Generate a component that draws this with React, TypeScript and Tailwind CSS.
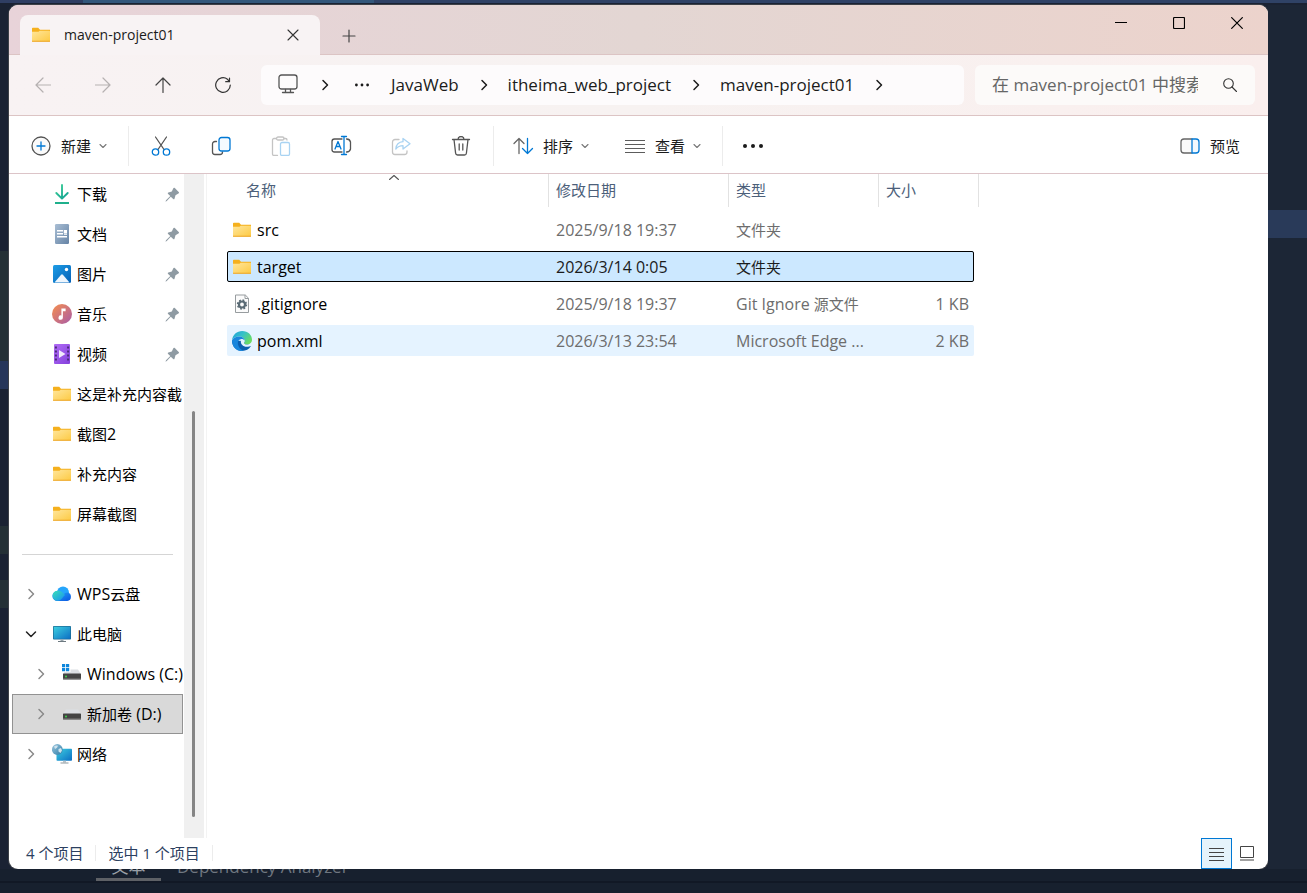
import type { ReactNode } from 'react'
import clsx from 'clsx'

/* ---------- line icons ---------- */

function Line({ children, size = 20, className }: { children: ReactNode; size?: number; className?: string }) {
  return (
    <svg
      width={size}
      height={size}
      viewBox={`0 0 ${size} ${size}`}
      fill="none"
      stroke="currentColor"
      strokeWidth="1.3"
      strokeLinecap="round"
      strokeLinejoin="round"
      className={clsx('shrink-0', className)}
      aria-hidden="true"
    >
      {children}
    </svg>
  )
}

const ChevronRight = ({ className }: { className?: string }) => (
  <Line size={16} className={className}>
    <path d="M6 3.5 10.5 8 6 12.5" strokeWidth="1.5" />
  </Line>
)

const ChevronDown = () => (
  <Line size={12} className="text-[#777777]">
    <path d="M3 4.5 6 7.5 9 4.5" strokeWidth="1.1" />
  </Line>
)

const PlusCircle = () => (
  <Line>
    <circle cx="10" cy="10" r="9" stroke="#555" fill="#fafafa" />
    <path d="M10 6v8M6 10h8" stroke="#0078d4" />
  </Line>
)

const Cut = () => (
  <Line>
    <path d="M4.500 1 13 13.500M15.500 1 7 13.500" stroke="#555" />
    <circle cx="4.500" cy="16" r="3.200" stroke="#0078d4" />
    <circle cx="15.500" cy="16" r="3.200" stroke="#0078d4" />
  </Line>
)

const Copy = () => (
  <Line>
    <path d="M5.500 5.500H4A2.500 2.500 0 0 0 1.500 8v8A2.500 2.500 0 0 0 4 18.500h5a2.500 2.500 0 0 0 2.500-2.500" stroke="#555" />
    <rect x="8" y="1.500" width="11" height="13.500" rx="2.500" stroke="#0078d4" fill="#f5faff" />
  </Line>
)

const Paste = () => (
  <Line>
    <path d="M5.500 2.500H3A1.500 1.500 0 0 0 1.500 4v14A1.500 1.500 0 0 0 3 19.500h3.500M13 2.500h1.500A1.500 1.500 0 0 1 16 4" stroke="#c4c4c4" />
    <rect x="5.500" y="1" width="7.500" height="3" rx="1.500" stroke="#c4c4c4" />
    <rect x="9.500" y="6.500" width="9" height="13" rx="1.500" stroke="#a9d3f2" />
  </Line>
)

const Rename = () => (
  <Line size={22}>
    <path d="M12 4H4.500A2.500 2.500 0 0 0 2 6.500v8A2.500 2.500 0 0 0 4.500 17H12M16.500 4a4 4 0 0 1 4 3v7a4 4 0 0 1-4 3" stroke="#555" />
    <path d="M14 1.500v18M11.500 1.500h5M11.500 19.500h5M5 14l3-7.500L11 14M6 11.500h4" stroke="#0078d4" />
  </Line>
)

const Share = () => (
  <Line>
    <path d="M8 3.500H4A2.500 2.500 0 0 0 1.500 6v10A2.500 2.500 0 0 0 4 18.500h9.500A2.500 2.500 0 0 0 16 16v-1" stroke="#c4c4c4" />
    <path d="M12 2.500v3.200c-4.500.3-6.800 3-7.200 7.300 2-2.500 4-3.300 7.200-3.300v3.300l7-5.300Z" stroke="#a9d3f2" />
  </Line>
)

const Trash = () => (
  <Line>
    <path d="M1.500 3.500h17M7 3.500a3 3 0 0 1 6 0M3 3.500l1.600 13.700A2 2 0 0 0 6.600 19h6.800a2 2 0 0 0 2-1.800L17 3.500M8.200 8v6M11.800 8v6" stroke="#555" />
  </Line>
)

const Sort = () => (
  <Line size={22}>
    <path d="M7 18.500V3.500M2 8.500l5-5 5 5" stroke="#666" />
    <path d="M15.500 3.500v15M10.500 13.500l5 5 5-5" stroke="#0078d4" />
  </Line>
)

const Lines = () => (
  <svg width="20" height="20" viewBox="0 0 20 20" className="shrink-0" aria-hidden="true">
    <path d="M0 4.500h20M0 8.500h20M0 12.500h20M0 16.500h20" stroke="#5c5c5c" />
  </svg>
)

const More = ({ size = 22, r = 2 }: { size?: number; r?: number }) => (
  <svg width={size} height="8" viewBox={`0 0 ${size} 8`} fill="#1b1b1b" className="shrink-0" aria-hidden="true">
    <circle cx={size / 2 - 4 * r} cy="4" r={r} />
    <circle cx={size / 2} cy="4" r={r} />
    <circle cx={size / 2 + 4 * r} cy="4" r={r} />
  </svg>
)

const PreviewPane = () => (
  <Line>
    <path d="M12 3H4A3 3 0 0 0 1 6v8a3 3 0 0 0 3 3h8" stroke="#666" fill="#fafafa" />
    <path d="M12 3h4a3 3 0 0 1 3 3v8a3 3 0 0 1-3 3h-4Z" stroke="#0078d4" fill="#f3f9fe" />
  </Line>
)

const Monitor = () => (
  <Line size={22} className="text-[#555555]">
    <rect x="2" y="1" width="18" height="14" rx="2.500" />
    <path d="M8.500 15.500v3M13.500 15.500v3M5.500 18.500h11" />
  </Line>
)

const Pin = () => (
  <svg width="16" height="16" viewBox="0 0 16 16" fill="#8f9ba3" className="shrink-0" aria-hidden="true">
    <path d="M9.200 2.500c.4-.9 1-.9 1.600-.4l3.900 3.900c.6.600.4 1.200-.3 1.600l-2.900 1.600-1 3.500c-.2.700-.8.800-1.300.3L6.800 10.700l-4 4.400-1.300.6.500-1.400 4.300-4.200-2.200-2.200c-.5-.5-.4-1.100.3-1.300l3.400-1Z" />
  </svg>
)

/* ---------- coloured icons ---------- */

const Pic = ({ children }: { children: ReactNode }) => (
  <svg width="20" height="20" viewBox="0 0 20 20" className="shrink-0" aria-hidden="true">
    {children}
  </svg>
)

const Folder = () => (
  <Pic>
    <path d="M1 3.500q0-.8.800-.8h5.400l1.800 2h10V9H1Z" fill="#f5b01d" />
    <path d="M1 6.700h6.500l1.200-1h9.600q.7 0 .7.700v10H1Z" fill="url(#folder)" />
    <path d="M1 15.800h18v.4q0 .6-.6.600H1.600q-.6 0-.6-.6Z" fill="#eda524" />
  </Pic>
)

const Download = () => (
  <Pic>
    <path d="M10 1v13.500M4.300 9l5.700 5.700L15.700 9" fill="none" stroke="url(#green)" strokeWidth="1.900" strokeLinecap="round" strokeLinejoin="round" />
    <path d="M3 19h14" stroke="#1fb08c" strokeWidth="1.800" />
  </Pic>
)

const Documents = () => (
  <Pic>
    <rect x="3" y="0" width="14" height="20" rx="1.200" fill="url(#doc)" />
    <path d="M5 6.700h6M5 9.700h6M5 12.700h10" stroke="#fff" strokeWidth="1.400" />
    <rect x="11.800" y="6" width="3.200" height="3.600" fill="#fff" />
    <path d="M12 10.500h3" stroke="#fff" strokeWidth=".8" />
  </Pic>
)

const Pictures = () => (
  <Pic>
    <rect x="1" y="1" width="18" height="18" rx="1.500" fill="url(#blue)" />
    <path d="m2.500 18.500 6.600-7.800q.9-.9 1.800 0l6.600 7.800Z" fill="#eef6fd" />
    <circle cx="14.500" cy="5.500" r="1.700" fill="#fff" />
  </Pic>
)

const Music = () => (
  <Pic>
    <circle cx="10" cy="10" r="10" fill="url(#music)" />
    <path d="M9.400 4.500h4.200v2.800h-2.700v6.200a2.200 2.200 0 1 1-1.500-2Z" fill="#fff" />
  </Pic>
)

const Videos = () => (
  <Pic>
    <rect x="2" y="0" width="16" height="20" rx="1" fill="url(#video)" />
    <path d="M3.900 2.500v16M16.100 2.500v16" stroke="#4b2a78" strokeWidth="2" strokeDasharray="2 2" />
    <path d="M7 6v8l6.500-4Z" fill="#f2eafc" />
  </Pic>
)

const Cloud = () => (
  <Pic>
    <circle cx="11" cy="8.500" r="6" fill="#25a5fb" />
    <path d="M6 7a5 5 0 1 0 0 9.900h9.300a4.300 4.300 0 0 0 0-8.500c-3 0-4.500 3.500-6.300 3.500Z" fill="url(#cloudBlue)" />
    <path d="M6 6.700a5 5 0 0 0-.4 10.100c3.900.3 5-4.300 7.500-5.800C11 9 9.500 6.700 6 6.700Z" fill="url(#cloudTeal)" />
  </Pic>
)

const Computer = () => (
  <Pic>
    <rect x="1" y="2" width="18" height="13.500" rx=".8" fill="#1c6a93" />
    <rect x="1.700" y="2.700" width="16.600" height="12.100" fill="url(#screen)" />
    <path d="M8.500 15.500h3v1.500h-3Z" fill="#9aa6ad" />
    <path d="M6 17h8v1H6Z" fill="#6d7980" />
  </Pic>
)

const Drive = ({ windows }: { windows?: boolean }) => (
  <Pic>
    <path d="M4 5.500h12l3 4.500H1Z" fill="#dcdfe3" />
    <rect x="1" y="9.500" width="18" height="6" rx=".6" fill="#444" />
    <path d="M1 14.800h18" stroke="#777" strokeWidth=".8" />
    <circle cx="4" cy="12.500" r=".9" fill="#3de04d" />
    {windows && (
      <>
        <rect x="-1" y="-1" width="9.500" height="9" fill="#fff" />
        <path d="M0 0h3.200v3.200H0ZM4 0h3.200v3.200H4ZM0 4h3.200v3.200H0ZM4 4h3.200v3.200H4Z" fill="#0d86dc" />
      </>
    )}
  </Pic>
)

const Network = () => (
  <Pic>
    <rect x="4.500" y="4.700" width="15.500" height="12" rx=".8" fill="url(#screen)" />
    <path d="M11 16.700h3v1.800h-3Z" fill="#b8c2c8" />
    <path d="M8.500 18.500h8v1h-8Z" fill="#8a969d" />
    <circle cx="5.300" cy="5.500" r="5.400" fill="url(#globe)" />
    <path d="M2 2.500q2-1.500 4-.8l-1 2-2 1.300ZM6.500 5l2.500-1 1 2.500-1.500 2.500L6.500 7.500Z" fill="#cfe3ee" />
  </Pic>
)

const ConfigFile = () => (
  <Pic>
    <path d="M3.500 1h9.800l3.200 3.200V18.500h-13Z" fill="#fbfbfb" stroke="#979c9f" />
    <path d="M13 1v3.500h3.500" fill="none" stroke="#979c9f" />
    <circle cx="10" cy="10.500" r="3" fill="none" stroke="#5a6b75" strokeWidth="2.200" />
    <circle cx="10" cy="10.500" r="4.400" fill="none" stroke="#5a6b75" strokeWidth="1.600" strokeDasharray="1.730 1.730" />
  </Pic>
)

const Edge = () => (
  <Pic>
    <path d="M0 9.500C0 15.500 4.500 20 10 20c4 0 7-1.900 8.800-4.700L12 10Z" fill="#0c5fb0" />
    <path d="M0 9.500C.5 3.800 5 0 10.200 0 16 0 20 4 20 8.700c0 3-2.200 4.800-5 4.800-1.800 0-3-.7-3-1.500 0-.5.700-.8.700-2 0-2.500-2.300-4.500-5.500-4.500C3.500 5.500.8 7.300 0 9.500Z" fill="url(#edgeTop)" />
    <path d="M0 9.500c.8-2.200 3.500-4 7.200-4 3.200 0 5.500 2 5.500 4.500-1-1.700-2.600-2.200-4-1.700C6.200 9 5.500 11 6 13.500c.5 3 3 5.300 5.500 6.300C5 21 0 16 0 9.500Z" fill="#1a86dc" />
    <path d="M12.700 10c-.9-1.400-2.600-1.500-3.700-.6-1 3.100 2 6.400 5.800 6.400 1.700 0 3.200-.3 4.200-1l.9-3.300c-1.100 1.400-2.900 2-4.900 2-1.800 0-3-.7-3-1.500 0-.5.700-.8.700-2Z" fill="#e4f2fe" />
  </Pic>
)

function Gradients() {
  return (
    <svg width="0" height="0" className="absolute" aria-hidden="true">
      <defs>
        <linearGradient id="folder" x1="0" y1="0" x2="1" y2="1">
          <stop stopColor="#ffe69c" />
          <stop offset="1" stopColor="#fdca44" />
        </linearGradient>
        <linearGradient id="green" gradientUnits="userSpaceOnUse" x1="4" y1="2" x2="16" y2="16">
          <stop stopColor="#3ccf96" />
          <stop offset="1" stopColor="#0f9e93" />
        </linearGradient>
        <linearGradient id="doc" x1="0" y1="0" x2="1" y2="1">
          <stop stopColor="#a9bed4" />
          <stop offset="1" stopColor="#6583a5" />
        </linearGradient>
        <linearGradient id="blue" x1="0" y1="0" x2="1" y2="1">
          <stop stopColor="#1d9de6" />
          <stop offset="1" stopColor="#0560b6" />
        </linearGradient>
        <linearGradient id="music" x1="0" y1="0" x2="1" y2="1">
          <stop offset=".1" stopColor="#ef8a56" />
          <stop offset=".9" stopColor="#b0609f" />
        </linearGradient>
        <linearGradient id="video" x1="0" y1="0" x2="1" y2="1">
          <stop stopColor="#b06cf5" />
          <stop offset="1" stopColor="#8440dc" />
        </linearGradient>
        <linearGradient id="cloudBlue" x1="0" y1="0" x2="1" y2="1">
          <stop stopColor="#2ab4ff" />
          <stop offset="1" stopColor="#0a55e0" />
        </linearGradient>
        <linearGradient id="cloudTeal" x1="0" y1="0" x2="1" y2="1">
          <stop stopColor="#3be0b4" />
          <stop offset="1" stopColor="#168ff5" />
        </linearGradient>
        <linearGradient id="screen" x1="0" y1="0" x2="1" y2="1">
          <stop stopColor="#3dcfe0" />
          <stop offset="1" stopColor="#0c6fc4" />
        </linearGradient>
        <linearGradient id="globe" x1="0" y1="0" x2="1" y2="1">
          <stop stopColor="#9cc6dd" />
          <stop offset="1" stopColor="#2f7ea8" />
        </linearGradient>
        <linearGradient id="edgeTop" x1="0" y1="0" x2="1" y2=".6">
          <stop stopColor="#1e9fdc" />
          <stop offset=".5" stopColor="#35c1c8" />
          <stop offset="1" stopColor="#6bdc62" />
        </linearGradient>
      </defs>
    </svg>
  )
}

/* ---------- data ---------- */

type SideItem = {
  label: string
  icon: ReactNode
  pinned?: boolean
  nested?: boolean
  open?: boolean
  selected?: boolean
}

const quickAccess: SideItem[] = [
  { label: '下载', icon: <Download />, pinned: true },
  { label: '文档', icon: <Documents />, pinned: true },
  { label: '图片', icon: <Pictures />, pinned: true },
  { label: '音乐', icon: <Music />, pinned: true },
  { label: '视频', icon: <Videos />, pinned: true },
  { label: '这是补充内容截', icon: <Folder /> },
  { label: '截图2', icon: <Folder /> },
  { label: '补充内容', icon: <Folder /> },
  { label: '屏幕截图', icon: <Folder /> },
]

const places: SideItem[] = [
  { label: 'WPS云盘', icon: <Cloud /> },
  { label: '此电脑', icon: <Computer />, open: true },
  { label: 'Windows (C:)', icon: <Drive windows />, nested: true },
  { label: '新加卷 (D:)', icon: <Drive />, nested: true, selected: true },
  { label: '网络', icon: <Network /> },
]

const files = [
  { name: 'src', icon: <Folder />, date: '2025/9/18 19:37', type: '文件夹', size: '' },
  { name: 'target', icon: <Folder />, date: '2026/3/14 0:05', type: '文件夹', size: '', state: 'selected' },
  { name: '.gitignore', icon: <ConfigFile />, date: '2025/9/18 19:37', type: 'Git Ignore 源文件', size: '1 KB' },
  { name: 'pom.xml', icon: <Edge />, date: '2026/3/13 23:54', type: 'Microsoft Edge ...', size: '2 KB', state: 'hover' },
]

const crumbs = ['JavaWeb', 'itheima_web_project', 'maven-project01']

const tools = [
  { label: '剪切', icon: <Cut /> },
  { label: '复制', icon: <Copy /> },
  { label: '粘贴', icon: <Paste />, disabled: true },
  { label: '重命名', icon: <Rename /> },
  { label: '共享', icon: <Share />, disabled: true },
  { label: '删除', icon: <Trash /> },
]

// Latin runs are set one size up so they sit level with the Chinese text.
function Mixed({ text }: { text: string }) {
  return text
    .split(/([\x20-\x7e]+)/)
    .filter(Boolean)
    .map((run, i) => (/^[\x20-\x7e]/.test(run) ? <span key={i} className="text-base leading-6">{run}</span> : run))
}

/* ---------- window parts ---------- */

function TitleBar() {
  return (
    <header className="flex h-[50px] items-start bg-gradient-to-r from-[#e8d3d9] via-[#e3d6d3] to-[#ecd3cc] pl-[11px] pr-[2px] shadow-[inset_0_-1px_0_#dcc4c4]">
      <div className="mt-[10px] flex h-10 w-[300px] items-center rounded-t-lg bg-[#f8f3f4] pl-[11px] pr-[11px]">
        <Folder />
        <span className="ml-[13px] flex-1 text-sm font-medium leading-6 text-[#1b1b1b]">maven-project01</span>
        <button type="button" aria-label="关闭标签页" className="flex size-8 items-center justify-center text-[#333333]">
          <Line size={12}>
            <path d="M1 1l10 10M11 1 1 11" strokeWidth="1.1" />
          </Line>
        </button>
      </div>
      <button type="button" aria-label="新建标签页" className="ml-[13px] mt-[15px] flex size-8 items-center justify-center text-[#444444]">
        <Line size={14}>
          <path d="M7 1v12M1 7h12" strokeWidth="1.2" />
        </Line>
      </button>
      <div className="ml-auto flex text-black">
        <button type="button" aria-label="最小化" className="flex h-9 w-[58px] items-center justify-center">
          <svg width="12" height="12" viewBox="0 0 12 12"><path d="M0 5.500h12" stroke="currentColor" /></svg>
        </button>
        <button type="button" aria-label="最大化" className="flex h-9 w-[58px] items-center justify-center">
          <svg width="12" height="12" viewBox="0 0 12 12"><rect x=".5" y=".5" width="11" height="11" rx="1" fill="none" stroke="currentColor" strokeWidth="1.200" /></svg>
        </button>
        <button type="button" aria-label="关闭" className="flex h-9 w-[58px] items-center justify-center">
          <svg width="12" height="12" viewBox="0 0 12 12"><path d="m.3.300 11.400 11.400M11.700.300.300 11.700" stroke="currentColor" strokeWidth="1.200" /></svg>
        </button>
      </div>
    </header>
  )
}

function NavBar() {
  return (
    <div className="flex h-[61px] items-center border-b border-[#dcc4c4] bg-gradient-to-r from-[#f8f2f3] via-[#f7f2f1] to-[#faefee] pl-1 pr-[13px]">
      <button type="button" aria-label="后退" disabled className="flex h-10 w-15 items-center justify-center text-[#b5b1b1]">
        <Line size={16}><path d="M15.500 8H1M8 1 1 8l7 7" strokeWidth="1.200" /></Line>
      </button>
      <button type="button" aria-label="前进" disabled className="flex h-10 w-15 items-center justify-center text-[#b5b1b1]">
        <Line size={16}><path d="M.5 8H15M8 1l7 7-7 7" strokeWidth="1.200" /></Line>
      </button>
      <button type="button" aria-label="上移" className="flex h-10 w-15 items-center justify-center text-[#444444]">
        <Line size={16}><path d="M8 15.500V1M1 8l7-7 7 7" strokeWidth="1.200" /></Line>
      </button>
      <button type="button" aria-label="刷新" className="flex h-10 w-15 items-center justify-center text-[#333333]">
        <Line size={16}><path d="M15.300 8A7.300 7.300 0 1 1 12.500 2.300L14.500 4.500M14.500 1v3.700h-3.800" strokeWidth="1.200" /></Line>
      </button>

      <nav aria-label="地址" className="ml-2 flex h-10 flex-1 items-center gap-[18px] rounded-md bg-[#fdfbfc] pl-4 text-[17px] text-[#1b1b1b]">
        <Monitor />
        <ChevronRight />
        <button type="button" aria-label="更多路径"><More r={1.4} /></button>
        <div className="flex items-center gap-4">
          {crumbs.map((crumb) => (
            <div key={crumb} className="flex items-center gap-[17px]">
              <button type="button" className="whitespace-nowrap leading-6">{crumb}</button>
              <ChevronRight />
            </div>
          ))}
        </div>
      </nav>

      <label className="ml-[11px] flex h-10 w-[280px] items-center rounded-md bg-[#fcfaf9] pl-[17px] pr-[18px]">
        <input
          type="text"
          aria-label="搜索"
          placeholder="在 maven-project01 中搜索"
          className="w-[206px] bg-transparent text-[17px] leading-6 text-[#1b1b1b] outline-none placeholder:text-[#666666]"
        />
        <Line size={14} className="ml-auto text-[#333333]">
          <circle cx="5.500" cy="5.500" r="4.800" strokeWidth="1.100" />
          <path d="m9 9 4.500 4.500" strokeWidth="1.100" />
        </Line>
      </label>
    </div>
  )
}

function ToolButton({ icon, label, menu }: { icon: ReactNode; label: string; menu?: boolean }) {
  return (
    <button type="button" className="flex h-10 items-center px-[17px] text-[#1b1b1b]">
      <span className="flex w-5 justify-center">{icon}</span>
      <span className="ml-[10px] mr-[6px] whitespace-nowrap">{label}</span>
      {menu && <ChevronDown />}
    </button>
  )
}

const Separator = () => <div className="mx-[2px] h-10 w-px bg-[#ececec]" />

function Toolbar() {
  return (
    <div className="flex h-[58px] items-center border-b border-[#dcc4c8] pl-[5px] pr-[5px] pt-[2px]">
      <ToolButton icon={<PlusCircle />} label="新建" menu />
      <Separator />
      {tools.map((t) => (
        <button key={t.label} type="button" aria-label={t.label} disabled={t.disabled} className="flex h-10 w-15 items-center justify-center">
          {t.icon}
        </button>
      ))}
      <Separator />
      <ToolButton icon={<Sort />} label="排序" menu />
      <ToolButton icon={<Lines />} label="查看" menu />
      <Separator />
      <button type="button" aria-label="更多" className="flex h-10 w-14 items-center justify-center">
        <More />
      </button>
      <div className="ml-auto">
        <ToolButton icon={<PreviewPane />} label="预览" />
      </div>
    </div>
  )
}

function SideRow({ item, tree }: { item: SideItem; tree?: boolean }) {
  return (
    <li>
      <a
        href="#"
        className={clsx(
          'ml-[3px] mr-px flex h-10 items-center border text-black',
          item.nested ? 'pl-5' : 'pl-[10px]',
          item.selected ? 'border-[#929292] bg-[#d9d9d9]' : 'border-transparent',
        )}
      >
        <span className="w-[29px] shrink-0">
          {tree && <ChevronRight className={item.open ? 'rotate-90 text-[#222222]' : 'text-[#8a8a8a]'} />}
        </span>
        {item.icon}
        <span className="ml-[5px] flex-1 whitespace-nowrap"><Mixed text={item.label} /></span>
        {item.pinned && <span className="mr-[2px]"><Pin /></span>}
      </a>
    </li>
  )
}

function Sidebar() {
  return (
    <aside className="flex w-[198px] shrink-0 border-r border-[#f3f3f3]">
      <nav aria-label="导航窗格" className="w-[175px] overflow-hidden">
        <ul>
          {quickAccess.map((item) => <SideRow key={item.label} item={item} />)}
        </ul>
        <hr className="mb-[19px] ml-[13px] mr-[11px] mt-5 border-[#d5d5d5]" />
        <ul>
          {places.map((item) => <SideRow key={item.label} item={item} tree />)}
        </ul>
      </nav>
      <div className="flex w-5 flex-col bg-[#f0f0f0] pb-[21px] pl-2">
        <div className="flex-[237]" />
        <div className="w-[3px] flex-[406] rounded-full bg-[#858585]" />
      </div>
    </aside>
  )
}

function FileTable() {
  return (
    <table className="ml-5 block self-start">
      <thead className="block">
        <tr className="grid h-[33px] grid-cols-[322px_180px_150px_100px] text-left text-[#4c607a]">
          {['名称', '修改日期', '类型', '大小'].map((head, i) => (
            <th key={head} scope="col" className={clsx('relative border-r border-[#e2e2e2] font-normal', i === 0 && 'ml-3')}>
              <button type="button" className="flex h-8 w-full items-center px-[7px]">{head}</button>
              {i === 0 && (
                <Line size={12} className="absolute inset-x-0 top-0 mx-auto text-[#555555]">
                  <path d="M1.500 5.500 6 1.500l4.500 4" strokeWidth="1.100" />
                </Line>
              )}
            </th>
          ))}
        </tr>
      </thead>
      <tbody className="flex flex-col gap-[6px] pt-[7px]">
        {files.map((f) => {
          const selected = f.state === 'selected'
          return (
            <tr
              key={f.name}
              className={clsx(
                'grid h-[31px] w-[747px] grid-cols-[322px_180px_150px_1fr] items-center rounded-xs',
                selected ? 'bg-[#cce8ff] text-[#1b1b1b] outline -outline-offset-1 outline-black' : 'text-[#6d6d6d]',
                f.state === 'hover' && 'bg-[#e5f3ff]',
              )}
            >
              <td className="flex items-center gap-[5px] pl-[5px] text-base leading-6 text-black">
                {f.icon}
                {f.name}
              </td>
              <td className="pl-[7px] text-base leading-6">{f.date}</td>
              <td className="whitespace-nowrap pl-[7px]"><Mixed text={f.type} /></td>
              <td className="pr-[5px] text-right"><Mixed text={f.size} /></td>
            </tr>
          )
        })}
      </tbody>
    </table>
  )
}

function StatusBar() {
  return (
    <footer className="flex h-[31px] items-center pl-[17px] pr-[5px] text-[#2c4060]">
      <div className="flex items-center pb-[2px]">
        <span className="whitespace-nowrap">4 个项目</span>
        <div className="mx-3 h-4 w-px bg-[#ececec]" />
        <span className="whitespace-nowrap">选中 1 个项目</span>
        <div className="mx-3 h-4 w-px bg-[#ececec]" />
      </div>
      <div className="ml-auto flex">
        <button type="button" aria-label="详细信息" aria-pressed="true" className="flex size-[31px] items-center justify-center border border-[#0078d4] bg-[#e5f3fb]">
          <svg width="15" height="15" viewBox="0 0 15 15"><path d="M0 2.500h15M0 6.500h15M0 10.500h15M0 14.500h15" stroke="#444" /></svg>
        </button>
        <button type="button" aria-label="大缩略图" className="flex size-[31px] items-center justify-center">
          <svg width="15" height="15" viewBox="0 0 15 15"><path d="M.5.500h13v11H.5ZM0 14h14" fill="none" stroke="#444" /></svg>
        </button>
      </div>
    </footer>
  )
}

export default function App() {
  return (
    <div className="flex min-h-screen flex-col bg-[#1a2233] font-['Open_Sans','Noto_Sans_CJK_SC',sans-serif] text-[15px] leading-6">
      <Gradients />
      {/* editor window that shows around the edges */}
      <div className="flex h-[5px] border-b-2 border-[#1a2233]">
        <div className="w-[83px] bg-[#2f3e63]" />
        <div className="w-[291px] bg-[#33577b]" />
        <div className="flex-1 bg-[#2f4266]" />
      </div>

      <div className="flex flex-1">
        <div className="flex w-[9px] flex-col">
          <div className="h-[246px]" />
          <div className="h-[110px] bg-[#243036]" />
          <div className="h-7 bg-[#26365a]" />
          <div className="h-[137px]" />
          <div className="h-7 bg-[#243036]" />
          <div className="h-[26px]" />
          <div className="h-7 bg-[#243036]" />
        </div>

        <main className="flex min-w-0 flex-1 flex-col overflow-hidden rounded-[9px] bg-white shadow-[0_0_0_1px_#3d4148]">
          <TitleBar />
          <NavBar />
          <Toolbar />
          <div className="flex flex-1">
            <Sidebar />
            <FileTable />
          </div>
          <StatusBar />
        </main>

        <div className="w-[39px] bg-[#1c2636] pt-[205px]">
          <div className="h-7 bg-[#293a59]" />
        </div>
      </div>

      <div className="h-6 overflow-hidden bg-[#17202e]">
        <div className="flex h-[14px] border-b-2 border-[#111825] pl-24 text-[17px]">
          <div className="w-[65px] border-b-[3px] border-[#5e6166]">
            <div className="-mt-3 text-center leading-5 text-[#9aa0a8]">文本</div>
          </div>
          <div className="-mt-3 ml-4 leading-5 text-[#6f7780]">Dependency Analyzer</div>
        </div>
      </div>
    </div>
  )
}
